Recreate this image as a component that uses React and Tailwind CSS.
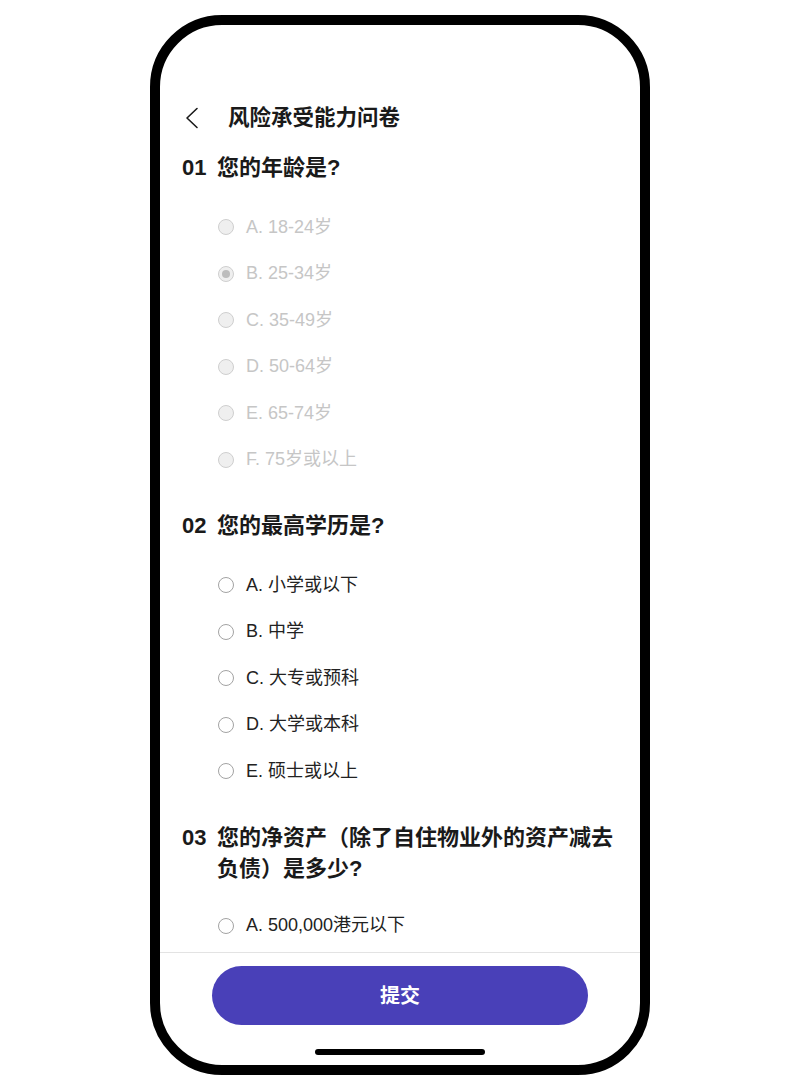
import { useState } from 'react';

const font = { fontFamily: '"Liberation Sans", "Noto Sans CJK SC", sans-serif' };

const questions = [
  {
    no: '01',
    title: '您的年龄是?',
    disabled: true,
    selected: 1,
    options: ['A. 18-24岁', 'B. 25-34岁', 'C. 35-49岁', 'D. 50-64岁', 'E. 65-74岁', 'F. 75岁或以上'],
  },
  {
    no: '02',
    title: '您的最高学历是?',
    options: ['A. 小学或以下', 'B. 中学', 'C. 大专或预科', 'D. 大学或本科', 'E. 硕士或以上'],
  },
  {
    no: '03',
    title: '您的净资产（除了自住物业外的资产减去负债）是多少?',
    tight: true,
    options: ['A. 500,000港元以下'],
  },
];

function Radio({ checked, disabled }) {
  if (disabled) {
    return (
      <span className="w-[16px] h-[16px] rounded-full border-[1.5px] border-[#cfcfcf] bg-[#efefef] flex items-center justify-center shrink-0">
        {checked && <span className="w-[8px] h-[8px] rounded-full bg-[#bdbdbd]" />}
      </span>
    );
  }
  return (
    <span className="w-[16px] h-[16px] rounded-full border-[1.5px] border-[#a3a3a3] bg-white flex items-center justify-center shrink-0">
      {checked && <span className="w-[8px] h-[8px] rounded-full bg-[#4940b8]" />}
    </span>
  );
}

function Question({ q, value, onChange }) {
  return (
    <div className="pt-[27px] first:pt-[10px]">
      <div className="flex text-[22px] leading-[31px] font-bold text-[#1a1a1a]">
        <span className="w-[35px] shrink-0">{q.no}</span>
        <span>{q.title}</span>
      </div>
      <div className={`${q.tight ? 'mt-[19px]' : 'mt-[21px]'} pl-[36px]`}>
        {q.options.map((opt, i) => {
          const checked = q.disabled ? q.selected === i : value === i;
          return (
            <button
              key={opt}
              disabled={q.disabled}
              onClick={() => onChange(i)}
              className="h-[46.5px] w-full flex items-center gap-[12px] text-left"
            >
              <Radio checked={checked} disabled={q.disabled} />
              <span className={`text-[18px] ${q.disabled ? 'text-[#c6c6c6]' : 'text-[#222222]'}`}>{opt}</span>
            </button>
          );
        })}
      </div>
    </div>
  );
}

export default function App() {
  const [answers, setAnswers] = useState({});

  return (
    <div className="min-h-[1090px] bg-white flex items-center justify-center" style={font}>
      <div className="w-[500px] h-[1060px] border-[10px] border-black rounded-[72px] overflow-hidden bg-white flex flex-col">
        {/* Header */}
        <div className="h-[69px] shrink-0" />
        <div className="h-[48px] shrink-0 flex items-center px-[22px]">
          <button className="w-[18px] h-[22px] flex items-center justify-center text-[#1a1a1a]">
            <svg width="16" height="22" viewBox="0 0 16 22" fill="none" stroke="currentColor" strokeWidth="1.6" strokeLinecap="round" strokeLinejoin="round">
              <path d="M14 1.5 4 11l10 9.5" />
            </svg>
          </button>
          <h1 className="ml-[28px] text-[21.5px] font-semibold text-[#1a1a1a]">风险承受能力问卷</h1>
        </div>

        {/* Questions */}
        <div className="flex-1 overflow-hidden px-[22px] pr-[24px]">
          {questions.map((q) => (
            <Question
              key={q.no}
              q={q}
              value={answers[q.no]}
              onChange={(i) => setAnswers({ ...answers, [q.no]: i })}
            />
          ))}
        </div>

        {/* Footer */}
        <div className="shrink-0 border-t border-[#e3e3e3] pt-[13px] pb-[10px] flex flex-col items-center">
          <button className="w-[376px] h-[59px] rounded-full bg-[#4940b8] text-white text-[20px] font-bold">
            提交
          </button>
          <div className="mt-[24px] w-[170px] h-[6px] rounded-full bg-black" />
        </div>
      </div>
    </div>
  );
}
